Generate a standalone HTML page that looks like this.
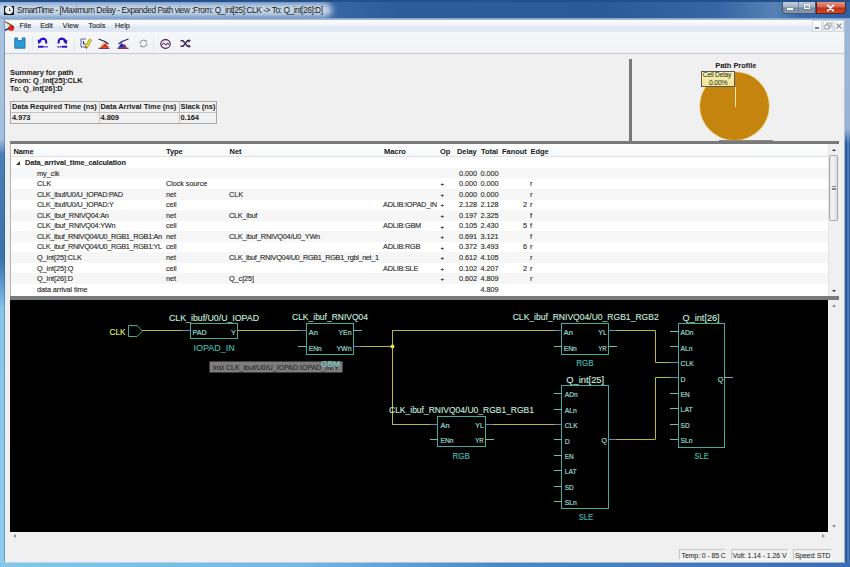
<!DOCTYPE html>
<html><head><meta charset="utf-8">
<style>
html,body{margin:0;padding:0;}
body{width:850px;height:567px;overflow:hidden;position:relative;background:#f0f0f0;font-family:"Liberation Sans",sans-serif;color:#1a1a1a;}
.a{position:absolute;}
.t{position:absolute;white-space:nowrap;line-height:1;}
.tr{font-size:7.35px;letter-spacing:-0.1px;color:#2a2a2a;-webkit-text-stroke:0.22px rgba(40,40,40,0.55);}
.th{font-size:7.5px;font-weight:bold;color:#1a1a1a;letter-spacing:-0.06px;}
.mn{font-size:7.4px;color:#141414;top:22.2px;-webkit-text-stroke:0.15px rgba(20,20,20,0.5);}
#frameL{left:0;top:19px;width:5px;height:548px;background:linear-gradient(180deg,#a9c3de 0,#a3c2e0 120px,#4a7fb8 135px,#3a72ac 240px,#5e9ad0 265px,#86c4ec 290px,#8ecbf0 548px);}
#frameR{left:844px;top:19px;width:6px;height:548px;background:linear-gradient(180deg,#9fb7d6 0,#98b2d4 110px,rgba(0,0,0,0) 125px),linear-gradient(90deg,#a0c0e2 0,#2d5d9c 22%,#28589a 45%,#5a8fc8 68%,#3566a6 85%,#2d5e9e 100%);}
#frameB{left:0;top:561.5px;width:850px;height:5.5px;background:linear-gradient(90deg,#86c4ea 0,#7ab6e0 300px,#4f86c0 500px,#3b6eae 850px);}
#title{left:0;top:0;width:850px;height:19px;background:linear-gradient(90deg,#aec2da 0,#b9cadf 180px,#9db5d3 240px,#5b83b6 300px,#2d5f9e 345px,#275895 560px,#2f62a0 680px,#4d78ac 760px,#3d6ca6 850px);}
svg text{font-family:"Liberation Sans",sans-serif;}
</style></head><body>
<!-- title bar -->
<div class="a" style="left:0;top:0;width:850px;height:19px;background:linear-gradient(90deg,#5f8dc0 0,#3b6ba8 300px,#2b5d9d 400px,#2a5a99 600px,#3666a3 720px,#5682b6 775px,#3a6aa6 800px,#2e62a3 850px)"></div>
<div class="a" style="left:-20px;top:3px;width:352px;height:13.5px;border-radius:7px;background:rgba(212,224,238,0.93);filter:blur(3px)"></div>
<div class="a" style="left:0;top:0;width:850px;height:1.5px;background:#23508c"></div>
<div class="a" style="left:0;top:17.5px;width:850px;height:2px;background:linear-gradient(180deg,#7f9fc8,#a9c0de)"></div>
<div class="a" style="left:4px;top:5.6px;width:10px;height:9.2px;background:#121420"></div>
<div class="a" style="left:5.3px;top:6.3px;width:7.6px;height:7.6px;border-radius:50%;background:#eceef2"></div>
<div class="a" style="left:8.6px;top:7.8px;width:0.9px;height:2.8px;background:#606060"></div>
<div class="a" style="left:8.6px;top:10px;width:2.5px;height:0.9px;background:#606060"></div>
<div class="t" style="left:17px;top:6.2px;font-size:8.4px;letter-spacing:-0.46px;color:#1b1b1b">SmartTime - [Maximum Delay - Expanded Path view :From: Q_int[25]:CLK -&gt; To: Q_int[26]:D]</div>
<!-- caption buttons -->
<div class="a" style="left:782px;top:1.5px;width:33.5px;height:12px;border-radius:0 0 0 4px;background:linear-gradient(180deg,#c2cedd 0,#a2b2c6 45%,#76889f 55%,#8a9db6 100%);border:1px solid #3e5676;border-top:none;box-sizing:border-box"></div>
<div class="a" style="left:798px;top:1.5px;width:1px;height:11.5px;background:#6b7f9c"></div>
<div class="a" style="left:787px;top:8px;width:6px;height:1.6px;background:#fff;box-shadow:0 0 1px #345"></div>
<div class="a" style="left:803.5px;top:4.2px;width:6.5px;height:5.3px;border:1px solid #fff;border-top-width:1.6px;box-sizing:border-box;box-shadow:0 0 1px #345"></div>
<div class="a" style="left:815.5px;top:1.5px;width:30px;height:12px;border-radius:0 0 4px 0;background:linear-gradient(180deg,#e39486 0,#d26450 45%,#bf3018 55%,#cc4a30 100%);border:1px solid #5e2018;border-top:none;box-sizing:border-box"></div>
<svg class="a" style="left:826px;top:3.5px" width="9" height="8" viewBox="0 0 9 8"><path d="M1.8 1.3 L7.2 6.7 M7.2 1.3 L1.8 6.7" stroke="#fff" stroke-width="1.8" stroke-linecap="round"/></svg>
<!-- menu bar -->
<div class="a" style="left:5px;top:19.5px;width:839px;height:12.5px;background:linear-gradient(180deg,#fdfdfe 0,#eef2f8 45%,#e0e8f3 55%,#dfe7f2 100%)"></div>
<svg class="a" style="left:0;top:17px" width="18" height="16" viewBox="0 0 18 16"><ellipse cx="9" cy="7.5" rx="2.8" ry="2" fill="#f8e0a0" opacity="0.8"/><path d="M4 4.2 L13.8 9.5" stroke="#3a2a30" stroke-width="1"/><ellipse cx="11.2" cy="11.2" rx="3" ry="2.6" fill="#e02810"/><path d="M10 8.5 L13.5 9.5 L13 12Z" fill="#b01808"/><path d="M4 13.6 L9 11.4" stroke="#1c1c6a" stroke-width="1.3"/></svg>
<div class="t mn" style="left:19.4px;">File</div>
<div class="t mn" style="left:40.2px;">Edit</div>
<div class="t mn" style="left:62.6px;">View</div>
<div class="t mn" style="left:88.2px;">Tools</div>
<div class="t mn" style="left:114.7px;">Help</div>
<!-- mdi buttons -->
<div class="a" style="left:811.5px;top:20px;width:10.5px;height:11.5px;background:linear-gradient(180deg,#fff,#edf1f6);border:1px solid #d4d9e0;box-sizing:border-box"></div>
<div class="a" style="left:822.5px;top:20px;width:10.5px;height:11.5px;background:linear-gradient(180deg,#fff,#edf1f6);border:1px solid #d4d9e0;box-sizing:border-box"></div>
<div class="a" style="left:833.5px;top:20px;width:10.5px;height:11.5px;background:linear-gradient(180deg,#fff,#edf1f6);border:1px solid #d4d9e0;box-sizing:border-box"></div>
<div class="a" style="left:814.5px;top:27px;width:4px;height:1.5px;background:#7a828e"></div>
<svg class="a" style="left:824px;top:22px" width="8" height="8" viewBox="0 0 8 8"><rect x="3" y="1" width="4" height="4" fill="none" stroke="#8a929c" stroke-width="0.9"/><rect x="1" y="3" width="4" height="4" fill="#f4f6f9" stroke="#8a929c" stroke-width="0.9"/></svg>
<svg class="a" style="left:835px;top:22px" width="8" height="8" viewBox="0 0 8 8"><path d="M1.5 1.5 L6.5 6.5 M6.5 1.5 L1.5 6.5" stroke="#8a929c" stroke-width="1.1"/></svg>
<!-- toolbar -->
<div class="a" style="left:5px;top:32px;width:839px;height:21.5px;background:linear-gradient(180deg,#f6f7f9 0,#f1f3f6 100%);border-bottom:1px solid #c6cad0;box-sizing:border-box"></div>

<!-- save -->
<svg class="a" style="left:13.5px;top:37px" width="12" height="12" viewBox="0 0 13 13"><path d="M0.8 1 H4 V3.8 H8.6 V1 H12 V12.2 H0.8 Z" fill="#2c9ad6" stroke="#1f6f9e" stroke-width="0.9"/><rect x="4.6" y="0.4" width="3.4" height="2.8" fill="#f6f6f6"/></svg>
<div class="a" style="left:32px;top:35.5px;width:1px;height:15px;background:#e6e8eb"></div>
<!-- undo / redo -->
<svg class="a" style="left:37px;top:37px" width="12" height="12" viewBox="0 0 12 12"><path d="M9.2 6.5 Q9.6 1.8 6.2 1.6 Q3.8 1.6 2.6 3.8" stroke="#2412c4" stroke-width="2.1" fill="none"/><path d="M0.6 2.6 L4.8 4.2 L1.4 7.2 Z" fill="#2412c4"/><rect x="1" y="8.8" width="5.6" height="1.9" fill="#2010b8"/><rect x="7.4" y="9" width="1.2" height="1.6" fill="#2010b8"/><rect x="9.4" y="9" width="1.2" height="1.6" fill="#2010b8"/></svg>
<svg class="a" style="left:55.5px;top:37px" width="12" height="12" viewBox="0 0 12 12"><path d="M2.6 6.5 Q2.2 1.8 5.6 1.6 Q8.2 1.6 9.4 4.2" stroke="#2412c4" stroke-width="2.1" fill="none"/><path d="M11.4 3 L7.2 4.4 L10.6 7.4 Z" fill="#2412c4"/><rect x="5.6" y="8.8" width="5.6" height="1.9" fill="#2010b8"/><rect x="1.6" y="9" width="1.2" height="1.6" fill="#2010b8"/><rect x="3.6" y="9" width="1.2" height="1.6" fill="#2010b8"/></svg>
<div class="a" style="left:73.5px;top:35.5px;width:1px;height:15px;background:#e6e8eb"></div>
<svg class="a" style="left:79.5px;top:37px" width="12" height="12" viewBox="0 0 12 12"><path d="M1 2 H6 M1 2 V10 H7" stroke="#4050a0" stroke-width="0.9" fill="none"/><path d="M3.5 4 V7 H5.5" stroke="#303030" stroke-width="1" fill="none"/><path d="M5 9.5 L9.5 2 L11.5 3.2 L7 11 Z" fill="#f0dc20" stroke="#786010" stroke-width="0.6"/><path d="M7 11 L6.5 12 L5 9.5Z" fill="#222"/></svg>
<svg class="a" style="left:98px;top:38px" width="12" height="11" viewBox="0 0 12 11"><path d="M0.5 1 Q6 2.5 10.5 6" stroke="#202058" stroke-width="1.2" fill="none"/><path d="M2 9.8 L7.5 5 L11 9.8 Z" fill="#e4300c"/><path d="M3 7.5 L6 5" stroke="#f0a020" stroke-width="1"/><path d="M0.5 10.3 H11.5" stroke="#5a1020" stroke-width="1"/></svg>
<svg class="a" style="left:117px;top:38px" width="12" height="11" viewBox="0 0 12 11"><path d="M11.5 1 Q6 2.5 1.5 6" stroke="#202080" stroke-width="1.2" fill="none"/><path d="M1 9.8 L4.5 5 L10 9.8 Z" fill="#2424b8"/><path d="M6 7 L10 10 L8 6 Z" fill="#e4300c"/><path d="M0.5 10.3 H11.5" stroke="#5a1020" stroke-width="1"/></svg>
<svg class="a" style="left:138.5px;top:39px" width="9" height="9" viewBox="0 0 9 9"><path d="M1.3 5 A3.2 3.2 0 0 1 7 2.5" stroke="#a0a4aa" stroke-width="1.3" fill="none"/><path d="M7.7 4 A3.2 3.2 0 0 1 2 6.5" stroke="#a0a4aa" stroke-width="1.3" fill="none"/><path d="M5.5 1.5 L8 1 L7.5 3.5Z M3.5 7.5 L1 8 L1.5 5.5Z" fill="#a0a4aa"/></svg>
<div class="a" style="left:153px;top:35.5px;width:1px;height:15px;background:#e6e8eb"></div>
<svg class="a" style="left:159.5px;top:38.5px" width="11" height="10" viewBox="0 0 11 10"><ellipse cx="5.5" cy="5" rx="4.7" ry="4.4" fill="none" stroke="#4a1848" stroke-width="1.1"/><path d="M2.5 6 Q3 3.5 4 4 Q4.5 4.5 5.5 6 Q6.5 7 7.2 4 Q8 3.5 8.6 6" stroke="#4a1848" stroke-width="0.9" fill="none"/></svg>
<svg class="a" style="left:179.5px;top:39px" width="11" height="9" viewBox="0 0 11 9"><path d="M0.5 1.8 H3 L7.5 7.2 H10 M0.5 7.2 H3 L7.5 1.8 H10" stroke="#3c2a58" stroke-width="1.5" fill="none"/><path d="M8.5 0 L11 1.8 L8.5 3.6Z M8.5 5.4 L11 7.2 L8.5 9Z" fill="#3c2a58"/></svg>
<!-- summary -->
<div class="t th" style="left:10px;top:68.6px;">Summary for path</div>
<div class="t th" style="left:10px;top:77px;">From: Q_int[25]:CLK</div>
<div class="t th" style="left:10px;top:85.4px;">To: Q_int[26]:D</div>
<div class="a" style="left:10px;top:100.5px;width:207px;height:23px;border:1px solid #a8a8a8;box-sizing:border-box;background:#f0f0f0"></div>
<div class="a" style="left:11px;top:101.5px;width:205px;height:11px;border-bottom:1px solid #c4c4c4;box-sizing:border-box"></div>
<div class="a" style="left:98.5px;top:101px;width:1px;height:22px;background:#c4c4c4"></div>
<div class="a" style="left:178.5px;top:101px;width:1px;height:22px;background:#c4c4c4"></div>
<div class="t th" style="left:12px;top:103.2px;">Data Required Time (ns)</div>
<div class="t th" style="left:100.5px;top:103.2px;">Data Arrival Time (ns)</div>
<div class="t th" style="left:180.5px;top:103.2px;">Slack (ns)</div>
<div class="t th" style="left:12px;top:113.7px;">4.973</div>
<div class="t th" style="left:100.5px;top:113.7px;">4.809</div>
<div class="t th" style="left:180.5px;top:113.7px;">0.164</div>
<!-- vertical splitter -->
<div class="a" style="left:629px;top:59px;width:3px;height:82px;background:#7a7a7a"></div>
<!-- pie -->
<div class="t th" style="left:715.3px;top:62px;letter-spacing:-0.05px">Path Profile</div>
<div class="a" style="left:700.4px;top:71.6px;width:69px;height:68.6px;border-radius:50%;background:#c4840e;box-shadow:0 0 0 0.8px #f3dc98"></div>
<div class="a" style="left:734.6px;top:86.5px;width:1.4px;height:20px;background:#f8e8b0"></div>
<div class="a" style="left:701.2px;top:71.2px;width:34px;height:15.4px;background:linear-gradient(180deg,#f6f2b8 0,#efe49a 100%);border:1px solid #5a5a50;box-sizing:border-box"></div>
<div class="t" style="left:702.8px;top:71.8px;font-size:6.9px;color:#2a2a14;letter-spacing:-0.3px">Cell Delay</div>
<div class="t" style="left:709px;top:79.7px;font-size:6.9px;color:#2a2a14;letter-spacing:-0.2px">0.00%</div>
<!-- horizontal splitter 1 -->
<div class="a" style="left:719px;top:139.6px;width:54px;height:1.6px;background:#8a8a8e"></div>
<div class="a" style="left:10px;top:141px;width:829px;height:3px;background:#7a7a7a"></div>
<!-- table -->
<div class="a" style="left:10px;top:144px;width:829px;height:152px;background:#fff;border-left:1px solid #b4b4b4;box-sizing:border-box"></div>
<div class="a" style="left:11px;top:144px;width:817px;height:13px;background:linear-gradient(180deg,#ffffff 0,#f7f8fa 100%);border-bottom:1px solid #dfe2e6;box-sizing:border-box"></div>
<div class="t th" style="left:13.4px;top:148px;">Name</div>
<div class="t th" style="left:166px;top:148px;">Type</div>
<div class="t th" style="left:229.6px;top:148px;">Net</div>
<div class="t th" style="left:384px;top:148px;">Macro</div>
<div class="t th" style="left:440px;top:148px;">Op</div>
<div class="t th" style="left:457px;top:148px;">Delay</div>
<div class="t th" style="left:481px;top:148px;">Total</div>
<div class="t th" style="left:502px;top:148px;">Fanout</div>
<div class="t th" style="left:530.5px;top:148px;">Edge</div>
<div class="a" style="left:16px;top:160.90px;width:0;height:0;border-left:4px solid transparent;border-bottom:4px solid #333"></div>
<div class="t tr" style="left:25px;top:159.00px;font-weight:bold;">Data_arrival_time_calculation</div>
<div class="a" style="left:11px;top:167.95px;width:817px;height:10.55px;background:#f6f6f6"></div>
<div class="t tr" style="left:37px;top:169.55px;">my_clk</div>
<div class="t tr" style="left:459px;top:169.55px">0.000</div>
<div class="t tr" style="left:480.5px;top:169.55px">0.000</div>
<div class="t tr" style="left:37px;top:180.10px;">CLK</div>
<div class="t tr" style="left:166px;top:180.10px">Clock source</div>
<div class="t tr" style="left:440.4px;top:181.30px;font-size:6px;-webkit-text-stroke:0.2px #333">+</div>
<div class="t tr" style="left:459px;top:180.10px">0.000</div>
<div class="t tr" style="left:480.5px;top:180.10px">0.000</div>
<div class="t tr" style="left:530px;top:180.10px">r</div>
<div class="a" style="left:11px;top:189.05px;width:817px;height:10.55px;background:#f6f6f6"></div>
<div class="t tr" style="left:37px;top:190.65px;letter-spacing:-0.27px;">CLK_ibuf/U0/U_IOPAD:PAD</div>
<div class="t tr" style="left:166px;top:190.65px">net</div>
<div class="t tr" style="left:229px;top:190.65px;">CLK</div>
<div class="t tr" style="left:440.4px;top:191.85px;font-size:6px;-webkit-text-stroke:0.2px #333">+</div>
<div class="t tr" style="left:459px;top:190.65px">0.000</div>
<div class="t tr" style="left:480.5px;top:190.65px">0.000</div>
<div class="t tr" style="left:530px;top:190.65px">r</div>
<div class="t tr" style="left:37px;top:201.20px;letter-spacing:-0.27px;">CLK_ibuf/U0/U_IOPAD:Y</div>
<div class="t tr" style="left:166px;top:201.20px">cell</div>
<div class="t tr" style="left:383px;top:201.20px;letter-spacing:-0.22px">ADLIB:IOPAD_IN</div>
<div class="t tr" style="left:440.4px;top:202.40px;font-size:6px;-webkit-text-stroke:0.2px #333">+</div>
<div class="t tr" style="left:459px;top:201.20px">2.128</div>
<div class="t tr" style="left:480.5px;top:201.20px">2.128</div>
<div class="t tr" style="right:323px;top:201.20px">2</div>
<div class="t tr" style="left:530px;top:201.20px">r</div>
<div class="a" style="left:11px;top:210.15px;width:817px;height:10.55px;background:#f6f6f6"></div>
<div class="t tr" style="left:37px;top:211.75px;letter-spacing:-0.27px;">CLK_ibuf_RNIVQ04:An</div>
<div class="t tr" style="left:166px;top:211.75px">net</div>
<div class="t tr" style="left:229px;top:211.75px;letter-spacing:-0.27px;">CLK_ibuf</div>
<div class="t tr" style="left:440.4px;top:212.95px;font-size:6px;-webkit-text-stroke:0.2px #333">+</div>
<div class="t tr" style="left:459px;top:211.75px">0.197</div>
<div class="t tr" style="left:480.5px;top:211.75px">2.325</div>
<div class="t tr" style="left:530px;top:211.75px">f</div>
<div class="t tr" style="left:37px;top:222.30px;letter-spacing:-0.27px;">CLK_ibuf_RNIVQ04:YWn</div>
<div class="t tr" style="left:166px;top:222.30px">cell</div>
<div class="t tr" style="left:383px;top:222.30px;letter-spacing:-0.22px">ADLIB:GBM</div>
<div class="t tr" style="left:440.4px;top:223.50px;font-size:6px;-webkit-text-stroke:0.2px #333">+</div>
<div class="t tr" style="left:459px;top:222.30px">0.105</div>
<div class="t tr" style="left:480.5px;top:222.30px">2.430</div>
<div class="t tr" style="right:323px;top:222.30px">5</div>
<div class="t tr" style="left:530px;top:222.30px">f</div>
<div class="a" style="left:11px;top:231.25px;width:817px;height:10.55px;background:#f6f6f6"></div>
<div class="t tr" style="left:37px;top:232.85px;letter-spacing:-0.36px;">CLK_ibuf_RNIVQ04/U0_RGB1_RGB1:An</div>
<div class="t tr" style="left:166px;top:232.85px">net</div>
<div class="t tr" style="left:229px;top:232.85px;letter-spacing:-0.27px;">CLK_ibuf_RNIVQ04/U0_YWn</div>
<div class="t tr" style="left:440.4px;top:234.05px;font-size:6px;-webkit-text-stroke:0.2px #333">+</div>
<div class="t tr" style="left:459px;top:232.85px">0.691</div>
<div class="t tr" style="left:480.5px;top:232.85px">3.121</div>
<div class="t tr" style="left:530px;top:232.85px">f</div>
<div class="t tr" style="left:37px;top:243.40px;letter-spacing:-0.36px;">CLK_ibuf_RNIVQ04/U0_RGB1_RGB1:YL</div>
<div class="t tr" style="left:166px;top:243.40px">cell</div>
<div class="t tr" style="left:383px;top:243.40px;letter-spacing:-0.22px">ADLIB:RGB</div>
<div class="t tr" style="left:440.4px;top:244.60px;font-size:6px;-webkit-text-stroke:0.2px #333">+</div>
<div class="t tr" style="left:459px;top:243.40px">0.372</div>
<div class="t tr" style="left:480.5px;top:243.40px">3.493</div>
<div class="t tr" style="right:323px;top:243.40px">6</div>
<div class="t tr" style="left:530px;top:243.40px">r</div>
<div class="a" style="left:11px;top:252.35px;width:817px;height:10.55px;background:#f6f6f6"></div>
<div class="t tr" style="left:37px;top:253.95px;">Q_int[25]:CLK</div>
<div class="t tr" style="left:166px;top:253.95px">net</div>
<div class="t tr" style="left:229px;top:253.95px;letter-spacing:-0.36px;">CLK_ibuf_RNIVQ04/U0_RGB1_RGB1_rgbl_net_1</div>
<div class="t tr" style="left:440.4px;top:255.15px;font-size:6px;-webkit-text-stroke:0.2px #333">+</div>
<div class="t tr" style="left:459px;top:253.95px">0.612</div>
<div class="t tr" style="left:480.5px;top:253.95px">4.105</div>
<div class="t tr" style="left:530px;top:253.95px">r</div>
<div class="t tr" style="left:37px;top:264.50px;">Q_int[25]:Q</div>
<div class="t tr" style="left:166px;top:264.50px">cell</div>
<div class="t tr" style="left:383px;top:264.50px;letter-spacing:-0.22px">ADLIB:SLE</div>
<div class="t tr" style="left:440.4px;top:265.70px;font-size:6px;-webkit-text-stroke:0.2px #333">+</div>
<div class="t tr" style="left:459px;top:264.50px">0.102</div>
<div class="t tr" style="left:480.5px;top:264.50px">4.207</div>
<div class="t tr" style="right:323px;top:264.50px">2</div>
<div class="t tr" style="left:530px;top:264.50px">r</div>
<div class="a" style="left:11px;top:273.45px;width:817px;height:10.55px;background:#f6f6f6"></div>
<div class="t tr" style="left:37px;top:275.05px;">Q_int[26]:D</div>
<div class="t tr" style="left:166px;top:275.05px">net</div>
<div class="t tr" style="left:229px;top:275.05px;">Q_c[25]</div>
<div class="t tr" style="left:440.4px;top:276.25px;font-size:6px;-webkit-text-stroke:0.2px #333">+</div>
<div class="t tr" style="left:459px;top:275.05px">0.602</div>
<div class="t tr" style="left:480.5px;top:275.05px">4.809</div>
<div class="t tr" style="left:530px;top:275.05px">r</div>
<div class="t tr" style="left:37px;top:285.60px;">data arrival time</div>
<div class="t tr" style="left:480.5px;top:285.60px">4.809</div>
<!-- table scrollbar -->
<div class="a" style="left:828px;top:144px;width:11px;height:152px;background:#f0f0f0;border-left:1px solid #e4e4e4;box-sizing:border-box"></div>
<div class="a" style="left:831.8px;top:148.8px;width:0;height:0;border-left:2px solid transparent;border-right:2px solid transparent;border-bottom:2.5px solid #333"></div>
<div class="a" style="left:828.6px;top:155.3px;width:9.6px;height:66px;background:linear-gradient(90deg,#e8e8ea,#f4f4f6 40%,#dcdcde);border:1px solid #a8a8ac;border-radius:1.5px;box-sizing:border-box"></div>
<div class="a" style="left:831.5px;top:185.5px;width:4px;height:5px;background:repeating-linear-gradient(180deg,#8a8a8a 0 0.8px,transparent 0.8px 1.7px)"></div>
<div class="a" style="left:831.8px;top:289.5px;width:0;height:0;border-left:2px solid transparent;border-right:2px solid transparent;border-top:2.5px solid #333"></div>
<!-- horizontal splitter 2 -->
<div class="a" style="left:10px;top:296px;width:829px;height:4px;background:#7a7a7a"></div>
<!-- canvas -->
<div class="a" style="left:10px;top:300px;width:818px;height:232px;background:#000"></div>
<svg class="a" style="left:10px;top:300px" width="818" height="232" viewBox="10 300 818 232">
<path d="M128.5 325.5 L137 325.5 L142.5 331 L137 336.5 L128.5 336.5 Z" fill="none" stroke="#45ab9c"/>
<text x="109.6" y="335.4" fill="#e6e65a" stroke="#e6e65a" stroke-width="0.15" font-size="9.8" text-anchor="start" textLength="16.0" lengthAdjust="spacingAndGlyphs">CLK</text>
<rect x="190.5" y="323.5" width="47.0" height="15.0" fill="none" stroke="#45ab9c" stroke-width="1"/>
<path d="M142.5 330.5 L181.5 330.5" fill="none" stroke="#bdb640" stroke-width="1" stroke-linecap="square"/>
<path d="M182.5 330.5 L189.5 330.5" fill="none" stroke="#5a8fb0" stroke-width="1" stroke-linecap="square"/>
<text x="192.5" y="335" fill="#96d6cc" stroke="#96d6cc" stroke-width="0.22" font-size="7.4" text-anchor="start" textLength="14.0" lengthAdjust="spacingAndGlyphs">PAD</text>
<text x="236" y="335" fill="#96d6cc" stroke="#96d6cc" stroke-width="0.22" font-size="7.4" text-anchor="end">Y</text>
<text x="169" y="320.5" fill="#c4e6df" stroke="#c4e6df" stroke-width="0.15" font-size="9.2" text-anchor="start" textLength="90.0" lengthAdjust="spacingAndGlyphs">CLK_ibuf/U0/U_IOPAD</text>
<text x="193.6" y="350.5" fill="#44b9ab" stroke="#44b9ab" stroke-width="0.15" font-size="8.6" text-anchor="start" textLength="41.0" lengthAdjust="spacingAndGlyphs">IOPAD_IN</text>
<path d="M237.5 330.5 L297.5 330.5" fill="none" stroke="#bdb640" stroke-width="1" stroke-linecap="square"/>
<path d="M298.5 330.5 L305.5 330.5" fill="none" stroke="#5a8fb0" stroke-width="1" stroke-linecap="square"/>
<rect x="306.5" y="323.5" width="47.0" height="31.0" fill="none" stroke="#45ab9c" stroke-width="1"/>
<path d="M298.5 346.5 L305.5 346.5" fill="none" stroke="#6fb9ae" stroke-width="1" stroke-linecap="square"/>
<path d="M353.5 330.5 L361.5 330.5" fill="none" stroke="#6fb9ae" stroke-width="1" stroke-linecap="square"/>
<path d="M353.5 346.5 L360.5 346.5" fill="none" stroke="#5a8fb0" stroke-width="1" stroke-linecap="square"/>
<text x="308.8" y="335" fill="#96d6cc" stroke="#96d6cc" stroke-width="0.22" font-size="7.4" text-anchor="start" textLength="9.0" lengthAdjust="spacingAndGlyphs">An</text>
<text x="308.8" y="351" fill="#96d6cc" stroke="#96d6cc" stroke-width="0.22" font-size="7.4" text-anchor="start" textLength="13.0" lengthAdjust="spacingAndGlyphs">ENn</text>
<text x="338.5" y="335" fill="#96d6cc" stroke="#96d6cc" stroke-width="0.22" font-size="7.4" text-anchor="start" textLength="13.0" lengthAdjust="spacingAndGlyphs">YEn</text>
<text x="336.5" y="351" fill="#96d6cc" stroke="#96d6cc" stroke-width="0.22" font-size="7.4" text-anchor="start" textLength="15.0" lengthAdjust="spacingAndGlyphs">YWn</text>
<text x="292" y="320.3" fill="#c4e6df" stroke="#c4e6df" stroke-width="0.15" font-size="9.2" text-anchor="start" textLength="76.0" lengthAdjust="spacingAndGlyphs">CLK_ibuf_RNIVQ04</text>
<path d="M361.5 346.5 L392.5 346.5" fill="none" stroke="#bdb640" stroke-width="1" stroke-linecap="square"/>
<path d="M392.5 330.5 L392.5 424.5" fill="none" stroke="#bdb640" stroke-width="1" stroke-linecap="square"/>
<path d="M392.5 330.5 L553.5 330.5" fill="none" stroke="#bdb640" stroke-width="1" stroke-linecap="square"/>
<path d="M392.5 424.5 L429.5 424.5" fill="none" stroke="#bdb640" stroke-width="1" stroke-linecap="square"/>
<circle cx="392.5" cy="346.5" r="1.9" fill="#e8e840"/>
<rect x="561.5" y="323.5" width="47.0" height="31.0" fill="none" stroke="#45ab9c" stroke-width="1"/>
<path d="M554.5 330.5 L561.5 330.5" fill="none" stroke="#5a8fb0" stroke-width="1" stroke-linecap="square"/>
<path d="M554.5 346.5 L561.5 346.5" fill="none" stroke="#6fb9ae" stroke-width="1" stroke-linecap="square"/>
<path d="M608.5 330.5 L615.5 330.5" fill="none" stroke="#5a8fb0" stroke-width="1" stroke-linecap="square"/>
<path d="M608.5 346.5 L616.5 346.5" fill="none" stroke="#6fb9ae" stroke-width="1" stroke-linecap="square"/>
<text x="563.8" y="335" fill="#96d6cc" stroke="#96d6cc" stroke-width="0.22" font-size="7.4" text-anchor="start" textLength="9.0" lengthAdjust="spacingAndGlyphs">An</text>
<text x="563.8" y="350.6" fill="#96d6cc" stroke="#96d6cc" stroke-width="0.22" font-size="7.4" text-anchor="start" textLength="13.0" lengthAdjust="spacingAndGlyphs">ENn</text>
<text x="598.3" y="335" fill="#96d6cc" stroke="#96d6cc" stroke-width="0.22" font-size="7.4" text-anchor="start" textLength="8.5" lengthAdjust="spacingAndGlyphs">YL</text>
<text x="598.3" y="350.6" fill="#96d6cc" stroke="#96d6cc" stroke-width="0.22" font-size="7.4" text-anchor="start" textLength="8.5" lengthAdjust="spacingAndGlyphs">YR</text>
<text x="512.7" y="319.9" fill="#c4e6df" stroke="#c4e6df" stroke-width="0.15" font-size="9.2" text-anchor="start" textLength="146.0" lengthAdjust="spacingAndGlyphs">CLK_ibuf_RNIVQ04/U0_RGB1_RGB2</text>
<text x="576.2" y="366" fill="#44b9ab" stroke="#44b9ab" stroke-width="0.15" font-size="8.6" text-anchor="start" textLength="17.5" lengthAdjust="spacingAndGlyphs">RGB</text>
<path d="M616.5 330.5 L655.5 330.5 L655.5 362.5 L669.5 362.5" fill="none" stroke="#bdb640" stroke-width="1" stroke-linecap="square"/>
<rect x="678.5" y="323.5" width="46.0" height="124.0" fill="none" stroke="#45ab9c" stroke-width="1"/>
<path d="M670.5 331.5 L677.5 331.5" fill="none" stroke="#6fb9ae" stroke-width="1" stroke-linecap="square"/>
<text x="680.6" y="335.2" fill="#96d6cc" stroke="#96d6cc" stroke-width="0.22" font-size="7.4" text-anchor="start" textLength="13.0" lengthAdjust="spacingAndGlyphs">ADn</text>
<path d="M670.5 346.5 L677.5 346.5" fill="none" stroke="#6fb9ae" stroke-width="1" stroke-linecap="square"/>
<text x="680.6" y="350.65" fill="#96d6cc" stroke="#96d6cc" stroke-width="0.22" font-size="7.4" text-anchor="start" textLength="12.0" lengthAdjust="spacingAndGlyphs">ALn</text>
<path d="M670.5 362.5 L677.5 362.5" fill="none" stroke="#5a8fb0" stroke-width="1" stroke-linecap="square"/>
<text x="680.6" y="366.09999999999997" fill="#96d6cc" stroke="#96d6cc" stroke-width="0.22" font-size="7.4" text-anchor="start" textLength="13.0" lengthAdjust="spacingAndGlyphs">CLK</text>
<path d="M670.5 377.5 L677.5 377.5" fill="none" stroke="#5a8fb0" stroke-width="1" stroke-linecap="square"/>
<text x="680.6" y="381.54999999999995" fill="#96d6cc" stroke="#96d6cc" stroke-width="0.22" font-size="7.4" text-anchor="start" textLength="5.0" lengthAdjust="spacingAndGlyphs">D</text>
<path d="M670.5 393.5 L677.5 393.5" fill="none" stroke="#6fb9ae" stroke-width="1" stroke-linecap="square"/>
<text x="680.6" y="397.0" fill="#96d6cc" stroke="#96d6cc" stroke-width="0.22" font-size="7.4" text-anchor="start" textLength="9.0" lengthAdjust="spacingAndGlyphs">EN</text>
<path d="M670.5 408.5 L677.5 408.5" fill="none" stroke="#6fb9ae" stroke-width="1" stroke-linecap="square"/>
<text x="680.6" y="412.45" fill="#96d6cc" stroke="#96d6cc" stroke-width="0.22" font-size="7.4" text-anchor="start" textLength="12.0" lengthAdjust="spacingAndGlyphs">LAT</text>
<path d="M670.5 424.5 L677.5 424.5" fill="none" stroke="#6fb9ae" stroke-width="1" stroke-linecap="square"/>
<text x="680.6" y="427.9" fill="#96d6cc" stroke="#96d6cc" stroke-width="0.22" font-size="7.4" text-anchor="start" textLength="9.0" lengthAdjust="spacingAndGlyphs">SD</text>
<path d="M670.5 439.5 L677.5 439.5" fill="none" stroke="#6fb9ae" stroke-width="1" stroke-linecap="square"/>
<text x="680.6" y="443.34999999999997" fill="#96d6cc" stroke="#96d6cc" stroke-width="0.22" font-size="7.4" text-anchor="start" textLength="12.0" lengthAdjust="spacingAndGlyphs">SLn</text>
<path d="M724.5 377.5 L732.5 377.5" fill="none" stroke="#6fb9ae" stroke-width="1" stroke-linecap="square"/>
<text x="717.7" y="381.6" fill="#96d6cc" stroke="#96d6cc" stroke-width="0.22" font-size="7.4" text-anchor="start" textLength="5.5" lengthAdjust="spacingAndGlyphs">Q</text>
<text x="682.6" y="320.8" fill="#c4e6df" stroke="#c4e6df" stroke-width="0.15" font-size="9.2" text-anchor="start" textLength="37.0" lengthAdjust="spacingAndGlyphs">Q_int[26]</text>
<text x="694.6" y="458.7" fill="#44b9ab" stroke="#44b9ab" stroke-width="0.15" font-size="8.6" text-anchor="start" textLength="14.0" lengthAdjust="spacingAndGlyphs">SLE</text>
<rect x="437.5" y="416.5" width="48.0" height="30.0" fill="none" stroke="#45ab9c" stroke-width="1"/>
<path d="M430.5 424.5 L437.5 424.5" fill="none" stroke="#5a8fb0" stroke-width="1" stroke-linecap="square"/>
<path d="M430.5 439.5 L437.5 439.5" fill="none" stroke="#6fb9ae" stroke-width="1" stroke-linecap="square"/>
<path d="M485.5 424.5 L492.5 424.5" fill="none" stroke="#5a8fb0" stroke-width="1" stroke-linecap="square"/>
<path d="M485.5 439.5 L493.5 439.5" fill="none" stroke="#6fb9ae" stroke-width="1" stroke-linecap="square"/>
<text x="440.5" y="428.4" fill="#96d6cc" stroke="#96d6cc" stroke-width="0.22" font-size="7.4" text-anchor="start" textLength="9.0" lengthAdjust="spacingAndGlyphs">An</text>
<text x="440.5" y="443" fill="#96d6cc" stroke="#96d6cc" stroke-width="0.22" font-size="7.4" text-anchor="start" textLength="13.0" lengthAdjust="spacingAndGlyphs">ENn</text>
<text x="475.3" y="428.4" fill="#96d6cc" stroke="#96d6cc" stroke-width="0.22" font-size="7.4" text-anchor="start" textLength="8.5" lengthAdjust="spacingAndGlyphs">YL</text>
<text x="475.3" y="443" fill="#96d6cc" stroke="#96d6cc" stroke-width="0.22" font-size="7.4" text-anchor="start" textLength="8.5" lengthAdjust="spacingAndGlyphs">YR</text>
<text x="389" y="412.5" fill="#c4e6df" stroke="#c4e6df" stroke-width="0.15" font-size="9.2" text-anchor="start" textLength="145.0" lengthAdjust="spacingAndGlyphs">CLK_ibuf_RNIVQ04/U0_RGB1_RGB1</text>
<text x="452.5" y="458.5" fill="#44b9ab" stroke="#44b9ab" stroke-width="0.15" font-size="8.6" text-anchor="start" textLength="17.5" lengthAdjust="spacingAndGlyphs">RGB</text>
<path d="M493.5 424.5 L553.5 424.5" fill="none" stroke="#bdb640" stroke-width="1" stroke-linecap="square"/>
<rect x="561.5" y="385.5" width="47.0" height="123.0" fill="none" stroke="#45ab9c" stroke-width="1"/>
<path d="M554.5 393.5 L561.5 393.5" fill="none" stroke="#6fb9ae" stroke-width="1" stroke-linecap="square"/>
<text x="564.7" y="397.4" fill="#96d6cc" stroke="#96d6cc" stroke-width="0.22" font-size="7.4" text-anchor="start" textLength="13.0" lengthAdjust="spacingAndGlyphs">ADn</text>
<path d="M554.5 409.5 L561.5 409.5" fill="none" stroke="#6fb9ae" stroke-width="1" stroke-linecap="square"/>
<text x="564.7" y="412.79999999999995" fill="#96d6cc" stroke="#96d6cc" stroke-width="0.22" font-size="7.4" text-anchor="start" textLength="12.0" lengthAdjust="spacingAndGlyphs">ALn</text>
<path d="M554.5 424.5 L561.5 424.5" fill="none" stroke="#5a8fb0" stroke-width="1" stroke-linecap="square"/>
<text x="564.7" y="428.2" fill="#96d6cc" stroke="#96d6cc" stroke-width="0.22" font-size="7.4" text-anchor="start" textLength="13.0" lengthAdjust="spacingAndGlyphs">CLK</text>
<path d="M554.5 439.5 L561.5 439.5" fill="none" stroke="#6fb9ae" stroke-width="1" stroke-linecap="square"/>
<text x="564.7" y="443.59999999999997" fill="#96d6cc" stroke="#96d6cc" stroke-width="0.22" font-size="7.4" text-anchor="start" textLength="5.0" lengthAdjust="spacingAndGlyphs">D</text>
<path d="M554.5 455.5 L561.5 455.5" fill="none" stroke="#6fb9ae" stroke-width="1" stroke-linecap="square"/>
<text x="564.7" y="459.0" fill="#96d6cc" stroke="#96d6cc" stroke-width="0.22" font-size="7.4" text-anchor="start" textLength="9.0" lengthAdjust="spacingAndGlyphs">EN</text>
<path d="M554.5 470.5 L561.5 470.5" fill="none" stroke="#6fb9ae" stroke-width="1" stroke-linecap="square"/>
<text x="564.7" y="474.4" fill="#96d6cc" stroke="#96d6cc" stroke-width="0.22" font-size="7.4" text-anchor="start" textLength="12.0" lengthAdjust="spacingAndGlyphs">LAT</text>
<path d="M554.5 486.5 L561.5 486.5" fill="none" stroke="#6fb9ae" stroke-width="1" stroke-linecap="square"/>
<text x="564.7" y="489.79999999999995" fill="#96d6cc" stroke="#96d6cc" stroke-width="0.22" font-size="7.4" text-anchor="start" textLength="9.0" lengthAdjust="spacingAndGlyphs">SD</text>
<path d="M554.5 501.5 L561.5 501.5" fill="none" stroke="#6fb9ae" stroke-width="1" stroke-linecap="square"/>
<text x="564.7" y="505.2" fill="#96d6cc" stroke="#96d6cc" stroke-width="0.22" font-size="7.4" text-anchor="start" textLength="12.0" lengthAdjust="spacingAndGlyphs">SLn</text>
<path d="M608.5 439.5 L616.5 439.5" fill="none" stroke="#5a8fb0" stroke-width="1" stroke-linecap="square"/>
<text x="601.5" y="443" fill="#96d6cc" stroke="#96d6cc" stroke-width="0.22" font-size="7.4" text-anchor="start" textLength="5.5" lengthAdjust="spacingAndGlyphs">Q</text>
<text x="566.2" y="382.5" fill="#c4e6df" stroke="#c4e6df" stroke-width="0.15" font-size="9.2" text-anchor="start" textLength="38.0" lengthAdjust="spacingAndGlyphs">Q_int[25]</text>
<text x="578.7" y="519.8" fill="#44b9ab" stroke="#44b9ab" stroke-width="0.15" font-size="8.6" text-anchor="start" textLength="14.5" lengthAdjust="spacingAndGlyphs">SLE</text>
<path d="M616.5 439.5 L655.5 439.5 L655.5 377.5 L669.5 377.5" fill="none" stroke="#bdb640" stroke-width="1" stroke-linecap="square"/>
<rect x="209.5" y="361.5" width="133" height="11" fill="#7d7d7d"/>
<text x="213" y="370.4" fill="#2e2e2e" stroke="#2e2e2e" stroke-width="0.15" font-size="8" text-anchor="start" textLength="126.0" lengthAdjust="spacingAndGlyphs">inst CLK_ibuf/U0/U_IOPAD:IOPAD_IN:Y</text>
<text x="321" y="367" fill="#7ccfc2" stroke="#7ccfc2" stroke-width="0.15" font-size="8.6" text-anchor="start" textLength="19.0" lengthAdjust="spacingAndGlyphs">GBM</text>
</svg>
<!-- canvas scroll arrows -->
<div class="a" style="left:831.5px;top:303.5px;width:0;height:0;border-left:2.5px solid transparent;border-right:2.5px solid transparent;border-bottom:3px solid #999"></div>
<div class="a" style="left:831.5px;top:525px;width:0;height:0;border-left:2.5px solid transparent;border-right:2.5px solid transparent;border-top:3px solid #999"></div>
<div class="a" style="left:12.5px;top:533.5px;width:0;height:0;border-top:2.5px solid transparent;border-bottom:2.5px solid transparent;border-right:3px solid #999"></div>
<div class="a" style="left:822px;top:533.5px;width:0;height:0;border-top:2.5px solid transparent;border-bottom:2.5px solid transparent;border-left:3px solid #999"></div>
<!-- status bar -->
<div class="a" style="left:678.5px;top:549px;width:47px;height:11px;border:1px solid #c8c8c8;border-right-color:#fafafa;border-bottom-color:#fafafa;box-sizing:border-box"></div>
<div class="a" style="left:730.5px;top:549px;width:58px;height:11px;border:1px solid #c8c8c8;border-right-color:#fafafa;border-bottom-color:#fafafa;box-sizing:border-box"></div>
<div class="a" style="left:792.5px;top:549px;width:39px;height:11px;border:1px solid #c8c8c8;border-right-color:#fafafa;border-bottom-color:#fafafa;box-sizing:border-box"></div>
<div class="t" style="left:681.5px;top:551.6px;font-size:7px;color:#222;letter-spacing:-0.12px">Temp: 0 - 85 C</div>
<div class="t" style="left:732.5px;top:551.6px;font-size:7px;color:#222;letter-spacing:-0.08px">Volt: 1.14 - 1.26 V</div>
<div class="t" style="left:795px;top:551.6px;font-size:7px;color:#222;letter-spacing:-0.3px">Speed: STD</div>
<!-- frame -->
<div class="a" id="frameL"></div>
<div class="a" id="frameR"></div>
<div class="a" id="frameB"></div>
<div class="a" style="left:4px;top:19px;width:1px;height:543px;background:rgba(40,70,110,0.35)"></div>
<div class="a" style="left:844px;top:19px;width:1px;height:543px;background:rgba(200,220,240,0.5)"></div>
<div class="a" style="left:4px;top:561.5px;width:841px;height:1px;background:rgba(210,230,248,0.6)"></div>
</body></html>
